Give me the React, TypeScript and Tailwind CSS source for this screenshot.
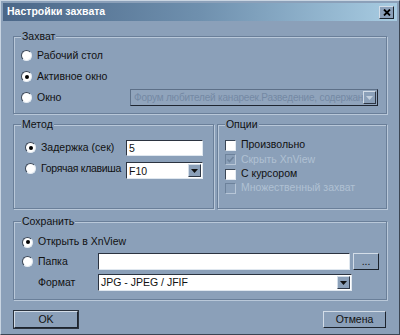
import React from "react";

const BG = "bg-[#8ba0b9]";

function Radio({ on }: { on?: boolean }) {
  return (
    <span className="w-[11px] h-[11px] shrink-0 rounded-full bg-white border border-[#3a4656] border-b-[#e4ebf2] border-r-[#e4ebf2] flex items-center justify-center">
      {on && <span className="w-[4px] h-[4px] rounded-full bg-black" />}
    </span>
  );
}

function Check({ checked, disabled }: { checked?: boolean; disabled?: boolean }) {
  return (
    <span
      className={
        disabled
          ? "w-[11px] h-[11px] shrink-0 bg-[#8ba0b9] border border-[#6d829b] border-b-[#b7c6d7] border-r-[#b7c6d7] flex items-center justify-center"
          : "w-[11px] h-[11px] shrink-0 bg-white border border-[#3a4656] border-b-[#e4ebf2] border-r-[#e4ebf2] flex items-center justify-center"
      }
    >
      {checked && (
        <svg width="9" height="9" viewBox="0 0 9 9">
          <path d="M1.5 4.5 L3.5 6.5 L7.5 2" fill="none" stroke="#6f849d" strokeWidth="1.6" />
        </svg>
      )}
    </span>
  );
}

function Arrow({ light }: { light?: boolean }) {
  return (
    <span className="w-[13px] self-stretch shrink-0 bg-[#8ba0b9] border border-[#d3dde8] border-b-[#2d3644] border-r-[#2d3644] flex items-center justify-center">
      <svg width="7" height="4" viewBox="0 0 7 4">
        <path d="M0 0 H7 L3.5 4 Z" fill={light ? "#c4d1df" : "#111"} />
      </svg>
    </span>
  );
}

function Group({ title, className, children }: { title: string; className: string; children: React.ReactNode }) {
  return (
    <div className={`relative border border-[#6a7f99] shadow-[inset_1px_1px_0_#b9c8d9,1px_1px_0_#b9c8d9] ${className}`}>
      <span className="absolute -top-[7px] left-[7px] px-[1px] bg-[#8ba0b9] leading-[13px] text-[#111]">{title}</span>
      {children}
    </div>
  );
}

function Button({ label, strong }: { label: string; strong?: boolean }) {
  return (
    <button
      className={
        strong
          ? "h-[17px] w-[64px] bg-[#8ba0b9] border border-[#d3dde8] border-b-[#1c232d] border-r-[#1c232d] outline outline-1 outline-[#2a323d] text-[#111] leading-none"
          : "h-[17px] w-[63px] bg-[#8ba0b9] border border-[#d3dde8] border-b-[#1c232d] border-r-[#1c232d] text-[#111] leading-none"
      }
    >
      {label}
    </button>
  );
}

export default function App() {
  return (
    <div className={`w-[400px] h-[335px] ${BG} border border-[#c9d5e2] border-b-[#3b4553] border-r-[#3b4553] p-[2px] font-['Liberation_Sans',Arial,sans-serif] text-[10.5px] text-[#111] flex flex-col whitespace-nowrap`}>
      <div className="h-[18px] bg-gradient-to-r from-[#4b6788] via-[#6f90ae] to-[#a8cce2] flex items-center justify-between pl-[4px] pr-[3px]">
        <span className="text-white font-bold text-[10.5px]">Настройки захвата</span>
        <span className="w-[15px] h-[13px] bg-[#8ba0b9] border border-[#d3dde8] border-b-[#1c232d] border-r-[#1c232d] flex items-center justify-center">
          <svg width="8" height="7" viewBox="0 0 8 7">
            <path d="M1 0.5 L7 6.5 M7 0.5 L1 6.5" stroke="#000" strokeWidth="1.8" />
          </svg>
        </span>
      </div>

      <div className="flex flex-col px-[10px] pt-[15px]">
        <Group title="Захват" className="h-[78px] pt-[8px] pl-[7px] pr-[8px]">
          <div className="h-[21px] flex items-center gap-[5px]">
            <Radio />
            <span>Рабочий стол</span>
          </div>
          <div className="h-[21px] flex items-center gap-[5px]">
            <Radio on />
            <span>Активное окно</span>
          </div>
          <div className="h-[21px] flex items-center gap-[5px]">
            <Radio />
            <span>Окно</span>
            <div className="ml-auto w-[248px] h-[17px] flex border border-[#5d7088] border-b-[#1e2530] border-r-[#1e2530] bg-[#90a4bc] p-[1px]">
              <span className="flex-1 min-w-0 overflow-hidden text-[#7489a4] text-[10px] tracking-[-0.2px] leading-[13px] pl-[2px]">
                Форум любителей канареек.Разведение, содержание
              </span>
              <Arrow light />
            </div>
          </div>
        </Group>

        <div className="flex gap-[3px] mt-[10px]">
          <Group title="Метод" className="w-[202px] h-[85px] pt-[12px] pl-[11px]">
            <div className="h-[21px] flex items-center">
              <Radio on />
              <span className="ml-[5px] w-[85px]">Задержка (сек)</span>
              <div className="w-[77px] h-[16px] bg-white border border-[#2b3340] border-b-[#dfe7ef] border-r-[#dfe7ef] pl-[2px] leading-[14px]">5</div>
            </div>
            <div className="h-[21px] flex items-center">
              <Radio />
              <span className="ml-[5px] w-[85px] tracking-[-0.3px]">Горячая клавиша</span>
              <div className="w-[77px] h-[17px] flex bg-white border border-[#2b3340] border-b-[#dfe7ef] border-r-[#dfe7ef] p-[1px] mt-[4px]">
                <span className="flex-1 pl-[1px] leading-[15px]">F10</span>
                <Arrow />
              </div>
            </div>
          </Group>
          <Group title="Опции" className="w-[171px] h-[85px] pt-[13px] pl-[7px]">
            <div className="h-[14px] flex items-center gap-[5px]">
              <Check />
              <span>Произвольно</span>
            </div>
            <div className="h-[15px] flex items-center gap-[5px]">
              <Check checked disabled />
              <span className="text-[#b0c0d3]">Скрыть XnView</span>
            </div>
            <div className="h-[14px] flex items-center gap-[5px]">
              <Check />
              <span>С курсором</span>
            </div>
            <div className="h-[14px] flex items-center gap-[5px]">
              <Check disabled />
              <span className="text-[#b0c0d3]">Множественный захват</span>
            </div>
          </Group>
        </div>

        <Group title="Сохранить" className="mt-[12px] h-[79px] pt-[10px] pl-[8px] pr-[7px]">
          <div className="h-[20px] flex items-center gap-[5px]">
            <Radio on />
            <span>Открыть в XnView</span>
          </div>
          <div className="h-[19px] flex items-center">
            <Radio />
            <span className="ml-[5px] w-[60px]">Папка</span>
            <div className="w-[254px] h-[17px] bg-white border border-[#2b3340] border-b-[#dfe7ef] border-r-[#dfe7ef]" />
            <button className="ml-[3px] w-[26px] h-[17px] bg-[#8ba0b9] border border-[#d3dde8] border-b-[#1c232d] border-r-[#1c232d] leading-none">...</button>
          </div>
          <div className="h-[17px] mt-[3px] flex items-center">
            <span className="ml-[16px] w-[60px]">Формат</span>
            <div className="w-[254px] h-[17px] flex bg-white border border-[#2b3340] border-b-[#dfe7ef] border-r-[#dfe7ef] p-[1px]">
              <span className="flex-1 pl-[1px] leading-[13px]">JPG - JPEG / JFIF</span>
              <Arrow />
            </div>
          </div>
        </Group>

        <div className="flex justify-between mt-[11px] px-[1px]">
          <Button label="OK" strong />
          <Button label="Отмена" />
        </div>
      </div>
    </div>
  );
}
